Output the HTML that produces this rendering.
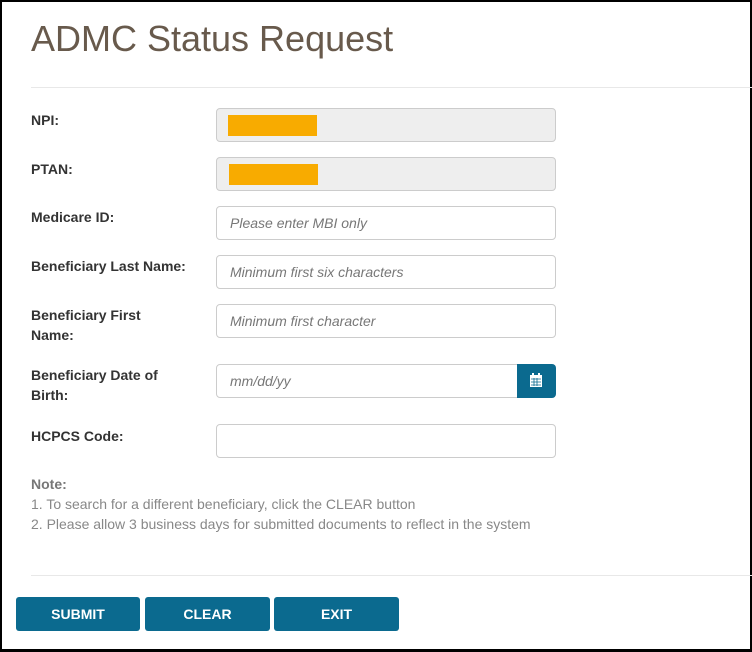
<!DOCTYPE html>
<html><head><style>
body{margin:0;width:752px;height:651px;overflow:hidden;background:#fff;font-family:"Liberation Sans",Arial,sans-serif;}
.frame{position:absolute;left:0;top:0;width:748px;height:647px;border:2px solid #000;border-right-width:3px;border-bottom-width:3px;}
.abs{position:absolute;}
h1{position:absolute;left:31px;top:18px;margin:0;font-size:36px;font-weight:normal;color:#685a4c;}
.hr{position:absolute;left:31px;right:0;height:1px;background:#e8e8e8;}
.lbl{position:absolute;left:31px;font-size:14px;font-weight:bold;color:#333;line-height:20px;}
.inp{position:absolute;left:216px;width:338px;height:32px;border:1px solid #ccc;border-radius:4px;background:#fff;font-size:14px;font-style:italic;color:#777;line-height:32px;padding-left:13px;box-sizing:content-box;width:325px;}
.dis{background:#eee;}
.bar{position:absolute;left:11px;top:6px;width:89px;height:21px;background:#f8ab00;}
.btn{position:absolute;top:597px;height:34px;background:#0b6a8f;color:#fff;font-weight:bold;font-size:14px;text-align:center;line-height:34px;border-radius:3px;}
.note{position:absolute;left:31px;top:474px;font-size:14px;color:#888;line-height:20px;}
</style></head><body>
<div class="frame"></div>
<h1>ADMC Status Request</h1>
<div class="hr" style="top:87px"></div>
<div class="lbl" style="top:110px">NPI:</div>
<div class="inp dis" style="top:108px"><div class="bar"></div></div>
<div class="lbl" style="top:159px">PTAN:</div>
<div class="inp dis" style="top:157px"><div class="bar" style="left:12px"></div></div>
<div class="lbl" style="top:207px">Medicare ID:</div>
<div class="inp" style="top:206px">Please enter MBI only</div>
<div class="lbl" style="top:256px">Beneficiary Last Name:</div>
<div class="inp" style="top:255px">Minimum first six characters</div>
<div class="lbl" style="top:305px">Beneficiary First<br>Name:</div>
<div class="inp" style="top:304px">Minimum first character</div>
<div class="lbl" style="top:365px">Beneficiary Date of<br>Birth:</div>
<div class="inp" style="top:364px;width:287px;border-radius:4px 0 0 4px">mm/dd/yy</div>
<div class="abs" style="left:517px;top:364px;width:39px;height:34px;background:#0b6a8f;border-radius:0 4px 4px 0">
<svg width="39" height="34" viewBox="0 0 39 34"><rect x="13" y="11" width="12" height="12" fill="#fff"/><rect x="15" y="9" width="2" height="3" fill="#fff"/><rect x="21" y="9" width="2" height="3" fill="#fff"/><path d="M14 15h10M14 18h10M14 21h10M17 14v8M20 14v8" stroke="#0b6a8f" stroke-width="0.8"/></svg></div>
<div class="lbl" style="top:426px">HCPCS Code:</div>
<div class="inp" style="top:424px"></div>
<div class="note"><b style="color:#777">Note:</b><br>1. To search for a different beneficiary, click the CLEAR button<br>2. Please allow 3 business days for submitted documents to reflect in the system</div>
<div class="hr" style="top:575px"></div>
<div class="btn" style="left:16px;width:124px">SUBMIT</div>
<div class="btn" style="left:145px;width:125px">CLEAR</div>
<div class="btn" style="left:274px;width:125px">EXIT</div>
</body></html>
